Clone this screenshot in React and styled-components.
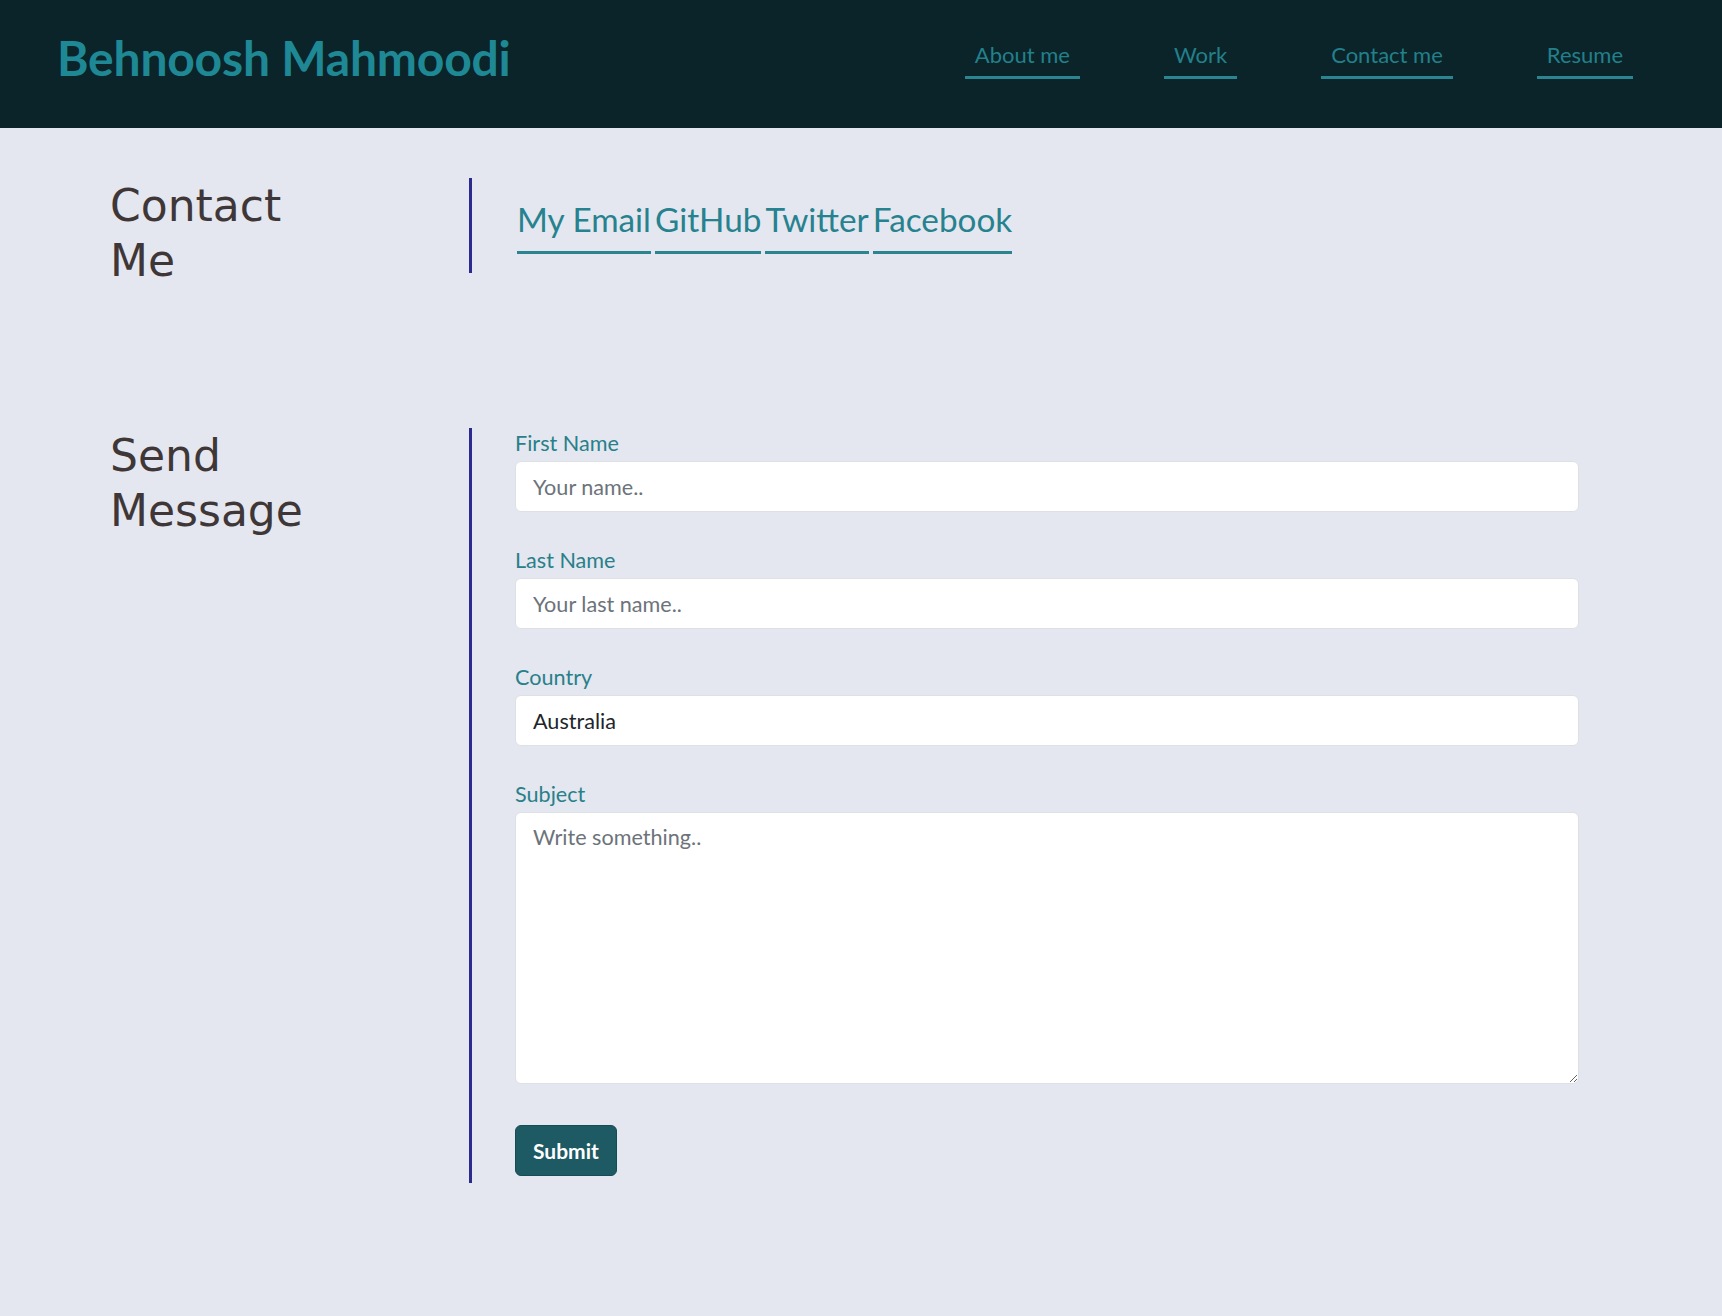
import React from 'react'
import styled, { createGlobalStyle } from 'styled-components'

const GlobalStyle = createGlobalStyle`
   * {
      box-sizing: border-box;
   }
   body {
      margin: 0;
      background: #e4e7ef;
      font-family: Lato, 'Open Sans', sans-serif;
   }
`

const navItems = ['About me', 'Work', 'Contact me', 'Resume']
const socials = ['My Email', 'GitHub', 'Twitter', 'Facebook']

const App = () => {
   return (
      <>
         <GlobalStyle />
         <Header>
            <Brand>Behnoosh Mahmoodi</Brand>
            <Nav>
               {navItems.map((item) => (
                  <NavLink key={item} href="#">
                     {item}
                  </NavLink>
               ))}
            </Nav>
         </Header>
         <Main>
            <Section $space="140px">
               <SideTitle>Contact Me</SideTitle>
               <Content $pad="17px 143px 19px 43px">
                  <Socials>
                     {socials.map((item) => (
                        <SocialLink key={item} href="#">
                           {item}
                        </SocialLink>
                     ))}
                  </Socials>
               </Content>
            </Section>
            <Section $space="130px">
               <SideTitle>Send Message</SideTitle>
               <Content $pad="0 143px 7px 43px">
                  <form onSubmit={(e) => e.preventDefault()}>
                     <Field>
                        <Label htmlFor="fname">First Name</Label>
                        <Input id="fname" type="text" placeholder="Your name.." />
                     </Field>
                     <Field>
                        <Label htmlFor="lname">Last Name</Label>
                        <Input id="lname" type="text" placeholder="Your last name.." />
                     </Field>
                     <Field>
                        <Label htmlFor="country">Country</Label>
                        <Select id="country" defaultValue="australia">
                           <option value="australia">Australia</option>
                           <option value="canada">Canada</option>
                           <option value="usa">USA</option>
                        </Select>
                     </Field>
                     <Field>
                        <Label htmlFor="subject">Subject</Label>
                        <TextArea id="subject" placeholder="Write something.." />
                     </Field>
                     <Submit type="submit">Submit</Submit>
                  </form>
               </Content>
            </Section>
         </Main>
      </>
   )
}

const Header = styled.header`
   display: flex;
   justify-content: space-between;
   align-items: flex-start;
   height: 128px;
   padding: 0 89px 0 57px;
   background: #0a242a;
`
const Brand = styled.h1`
   margin: 28px 0 0;
   font-size: 48px;
   line-height: 60px;
   font-weight: 700;
   color: #1f8895;
   letter-spacing: -0.2px;
`
const Nav = styled.nav`
   display: flex;
   gap: 84px;
   margin-top: 38px;
`
const NavLink = styled.a`
   display: block;
   padding: 0 10px 5px;
   font-size: 22px;
   line-height: 33px;
   color: #23808a;
   text-decoration: none;
   border-bottom: 3px solid #2a8591;
`
const Main = styled.main`
   padding-top: 50px;
`
const Section = styled.section`
   display: flex;
   align-items: flex-start;
   padding-left: 110px;
   margin-bottom: ${({ $space }) => $space};
`
const SideTitle = styled.h2`
   flex: 0 0 359px;
   margin: 0;
   padding-right: 140px;
   font-family: 'Comic Sans MS', 'DejaVu Sans', sans-serif;
   font-size: 44px;
   line-height: 55px;
   font-weight: 400;
   color: #3f3737;
`
const Content = styled.div`
   flex: 1;
   padding: ${({ $pad }) => $pad};
   border-left: 3px solid #2b2a8e;
`
const Socials = styled.div`
   display: flex;
   gap: 4px;
   margin-left: 2px;
`
const SocialLink = styled.a`
   display: block;
   padding-bottom: 8px;
   font-size: 33.3px;
   line-height: 48px;
   color: #26828e;
   text-decoration: none;
   border-bottom: 3px solid #2a8591;
`
const Field = styled.div`
   margin-bottom: 33px;
`
const Label = styled.label`
   display: block;
   margin-bottom: 2px;
   font-size: 21.6px;
   line-height: 31px;
   color: #28808a;
`
const fieldStyles = `
   display: block;
   width: 100%;
   padding: 0 17px;
   font-family: Lato, 'Open Sans', sans-serif;
   font-size: 21.6px;
   color: #212529;
   background: #ffffff;
   border: 1px solid #dde1e6;
   border-radius: 6px;
   outline: none;
   &::placeholder {
      color: #6c737a;
   }
`
const Input = styled.input`
   ${fieldStyles}
   height: 51px;
`
const Select = styled.select`
   ${fieldStyles}
   height: 51px;
   appearance: none;
`
const TextArea = styled.textarea`
   ${fieldStyles}
   height: 272px;
   padding: 9px 17px;
   line-height: 31px;
   resize: vertical;
`
const Submit = styled.button`
   display: block;
   margin-top: 41px;
   height: 51px;
   padding: 0 17px;
   font-family: Lato, 'Open Sans', sans-serif;
   font-size: 21px;
   font-weight: 700;
   color: #ffffff;
   background: #1d5a63;
   border: 1px solid #164c54;
   border-radius: 6px;
   cursor: pointer;
`

export default App
